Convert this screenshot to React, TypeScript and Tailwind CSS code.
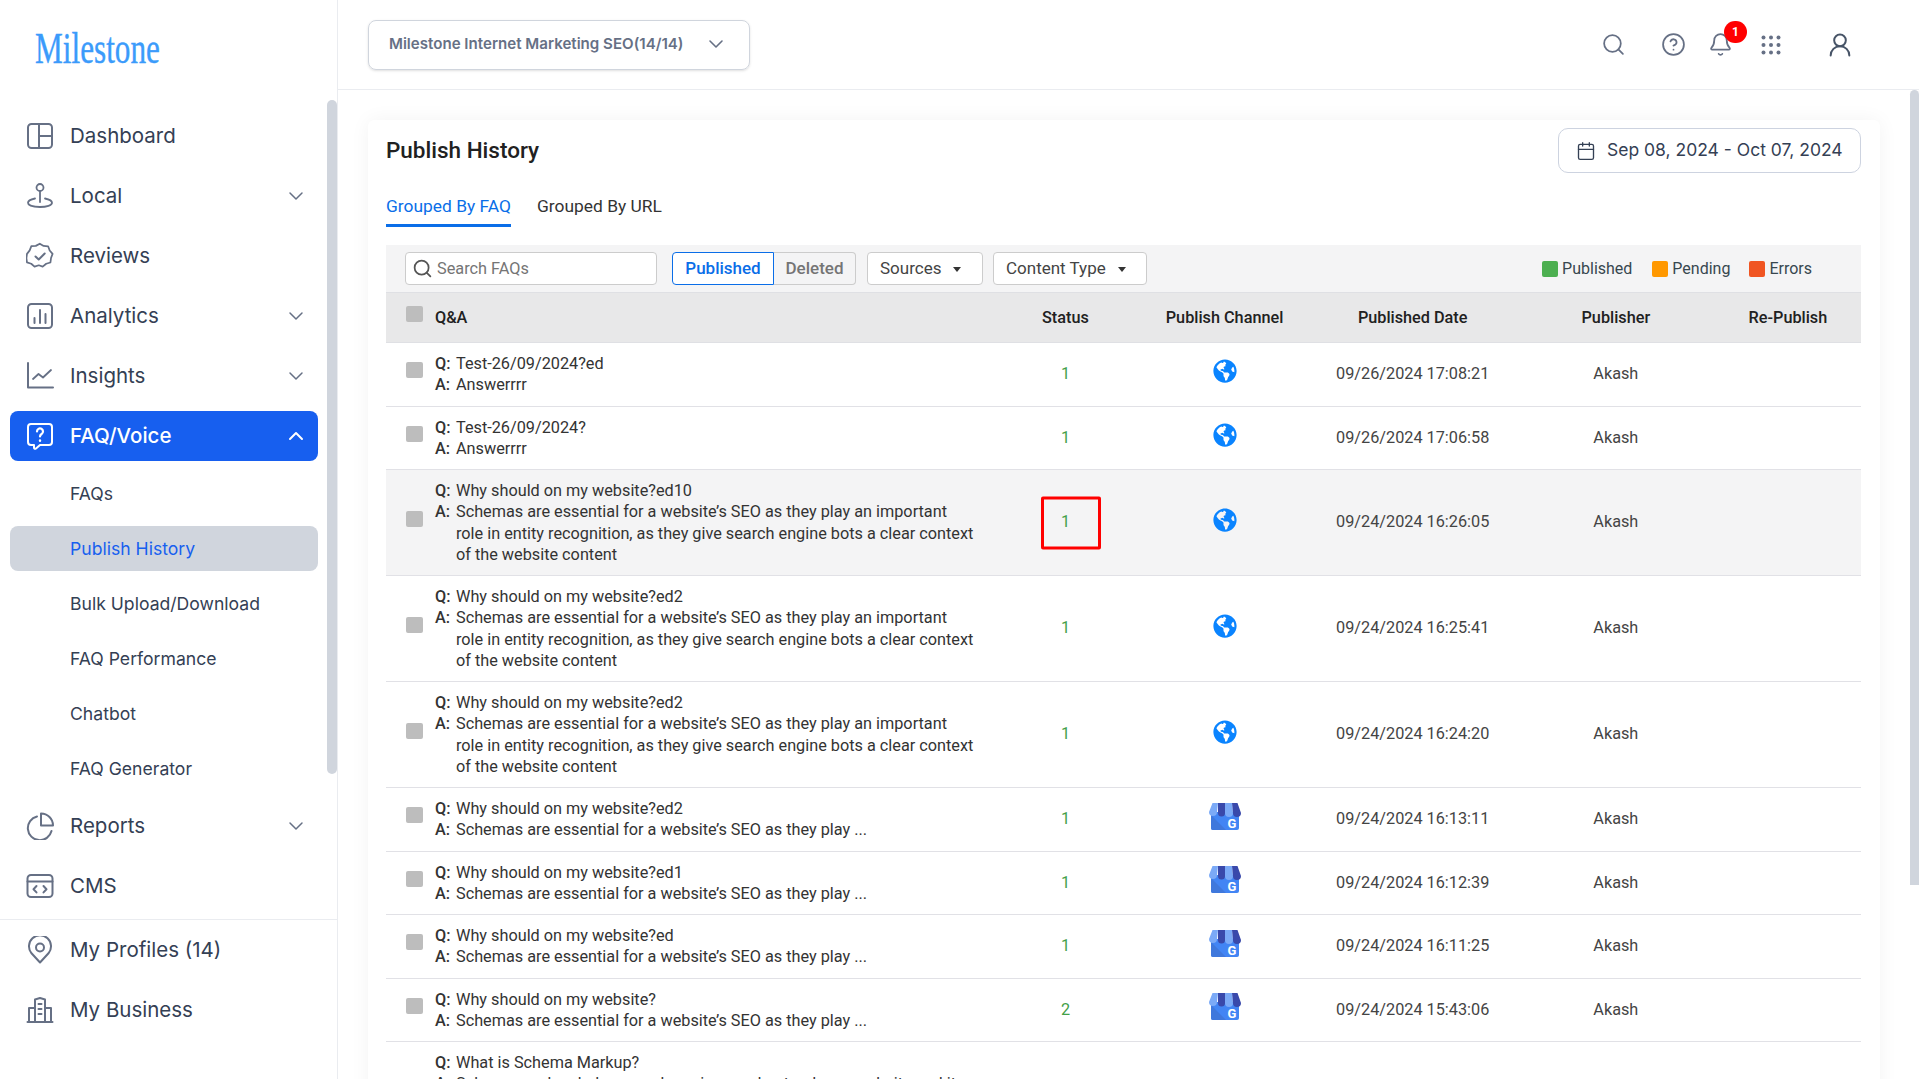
import { ChevronDown, ChevronUp, Search, CircleHelp, Bell, Calendar, UserRound } from 'lucide-react';
import { FaGlobeAmericas } from 'react-icons/fa';
import type { ReactNode } from 'react';

const iconProps = {
	viewBox: '0 0 28 28',
	fill: 'none',
	stroke: 'currentColor',
	strokeWidth: 1.8,
	strokeLinecap: 'round' as const,
	strokeLinejoin: 'round' as const,
	className: 'w-7 h-7 shrink-0',
};

const DashboardIcon = () => (
	<svg {...iconProps}>
		<rect x="2" y="2" width="24" height="24" rx="3.5" strokeWidth="2" />
		<path d="M13 2v24M13 14h13" strokeWidth="2" />
	</svg>
);
const LocalIcon = () => (
	<svg {...iconProps}>
		<circle cx="14" cy="5.5" r="3.5" />
		<path d="M14 9v11" />
		<path d="M9 16.5c-4 .8-7 2.3-7 4.3 0 2.6 5.4 4.2 12 4.2s12-1.6 12-4.2c0-2-3-3.5-7-4.3" />
	</svg>
);
const ReviewsIcon = () => (
	<svg {...iconProps}>
		<path d="M14 1.5l4 2.4 4.6.3 1.6 4.3 3 3.5-1.6 4.3-.6 4.6-4.4 1.3-3.6 3-4-1.4-4.4 1.4-3.4-3-4.4-1.4-.6-4.5L.8 12l2.8-3.6 1.7-4.3 4.6-.3z" transform="translate(.2 .2) scale(.97)" />
		<path d="M9.5 14.5l3.2 3 6-6" strokeWidth="2" />
	</svg>
);
const AnalyticsIcon = () => (
	<svg {...iconProps}>
		<rect x="2" y="2" width="24" height="24" rx="3.5" strokeWidth="2" />
		<path d="M8.5 21v-5M14 21V8M19.5 21v-9" strokeWidth="2" />
	</svg>
);
const InsightsIcon = () => (
	<svg {...iconProps}>
		<path d="M2 1v24.5h25" strokeWidth="2" />
		<path d="M7 17l5.5-5 4.5 3.5 8-7.5" />
	</svg>
);
const FaqIcon = () => (
	<svg {...iconProps}>
		<path d="M5 2h18a3 3 0 0 1 3 3v15a3 3 0 0 1-3 3h-9l-4 3.5c-.8.6-2 .4-2-.8V23H5a3 3 0 0 1-3-3V5a3 3 0 0 1 3-3z" strokeWidth="2" />
		<path d="M11 9.5a3 3 0 1 1 4.6 2.5c-1 .7-1.6 1.2-1.6 2.5" strokeWidth="2.2" />
		<path d="M14 18.5v.2" strokeWidth="2.4" />
	</svg>
);
const ReportsIcon = () => (
	<svg {...iconProps}>
		<path d="M11 4.5A12 12 0 1 0 25.5 19" strokeWidth="2" />
		<path d="M15 1.5A12 12 0 0 1 27 13.5H15z" strokeWidth="2" />
	</svg>
);
const CmsIcon = () => (
	<svg {...iconProps}>
		<rect x="1.5" y="3" width="25" height="22" rx="3.5" strokeWidth="2" />
		<path d="M1.5 9.5h25" strokeWidth="2" />
		<path d="M10.5 14l-3 3.2 3 3.2M17.5 14l3 3.2-3 3.2" strokeWidth="2" />
	</svg>
);
const PinIcon = () => (
	<svg {...iconProps}>
		<path d="M14 26.5l-8.5-9.2a11 11 0 1 1 17 0z" strokeWidth="2" />
		<circle cx="14" cy="11.5" r="4" strokeWidth="2" />
	</svg>
);
const BusinessIcon = () => (
	<svg {...iconProps}>
		<path d="M1.5 26h25" strokeWidth="2" />
		<path d="M9 26V3.5L14 2l5 1.5V26" strokeWidth="2" />
		<path d="M3 26V12h6M25 26V12h-6" strokeWidth="2" />
		<path d="M12.5 8h3M12.5 13h3M12.5 18h3" strokeWidth="2" />
	</svg>
);

const GridIcon = () => (
	<svg viewBox="0 0 20 20" className="w-5 h-5" fill="currentColor">
		{[2.5, 10, 17.5].map((cy) =>
			[2.5, 10, 17.5].map((cx) => <circle key={`${cx}-${cy}`} cx={cx} cy={cy} r="2" />),
		)}
	</svg>
);

const GmbIcon = () => (
	<svg viewBox="0 0 32 27" className="w-8 h-[27px]">
		<path d="M2 9h28v16a2 2 0 0 1-2 2H4a2 2 0 0 1-2-2z" fill="#4285f4" />
		<path d="M2 12l15 15H4a2 2 0 0 1-2-2z" fill="#3f78dc" />
		<path d="M3.500 0h5.500l-1 9a4 4 0 0 1-8 0z" fill="#7baaf7" />
		<path d="M9 0h7v10a3.500 3.500 0 0 1-7 0z" fill="#3949ab" />
		<path d="M16 0h7l1 10a4 4 0 0 1-8 0z" fill="#7baaf7" />
		<path d="M23 0h5.500L32 10a4 4 0 0 1-8 0z" fill="#3949ab" />
		<text x="23" y="25" textAnchor="middle" fontSize="13" fontWeight="700" fill="#fff" fontFamily="Roboto, sans-serif">G</text>
	</svg>
);

function NavItem({ icon, label, chevron, active }: { icon: ReactNode; label: string; chevron?: boolean; active?: boolean }) {
	return (
		<a className={`flex items-center h-[50px] pl-[16px] pr-[10px] rounded-lg ${active ? 'bg-[#175fef] text-white font-medium' : 'text-[#667085]'}`}>
			{icon}
			<span className={`ml-[16px] text-[20.500px] ${active ? 'text-white' : 'text-[#344054]'}`}>{label}</span>
			{chevron && !active && <ChevronDown className="ml-auto w-6 h-6" strokeWidth={1.5} />}
			{chevron && active && <ChevronUp className="ml-auto w-6 h-6" strokeWidth={2} />}
		</a>
	);
}

function SubItem({ label, active }: { label: string; active?: boolean }) {
	return (
		<a className={`flex items-center h-[45px] pt-[1px] pl-[60px] rounded-lg text-[17.600px] ${active ? 'bg-[#d0d5dd] text-[#175fef]' : 'text-[#344054]'}`}>
			{label}
		</a>
	);
}

type Row = { q: string; a: string[]; status: number; channel: 'web' | 'gmb'; date: string; hl?: boolean; box?: boolean };

const longAnswer = [
	'Schemas are essential for a website’s SEO as they play an important',
	'role in entity recognition, as they give search engine bots a clear context',
	'of the website content',
];
const shortAnswer = ['Schemas are essential for a website’s SEO as they play ...'];

const rows: Row[] = [
	{ q: 'Test-26/09/2024?ed', a: ['Answerrrr'], status: 1, channel: 'web', date: '09/26/2024 17:08:21' },
	{ q: 'Test-26/09/2024?', a: ['Answerrrr'], status: 1, channel: 'web', date: '09/26/2024 17:06:58' },
	{ q: 'Why should on my website?ed10', a: longAnswer, status: 1, channel: 'web', date: '09/24/2024 16:26:05', hl: true, box: true },
	{ q: 'Why should on my website?ed2', a: longAnswer, status: 1, channel: 'web', date: '09/24/2024 16:25:41' },
	{ q: 'Why should on my website?ed2', a: longAnswer, status: 1, channel: 'web', date: '09/24/2024 16:24:20' },
	{ q: 'Why should on my website?ed2', a: shortAnswer, status: 1, channel: 'gmb', date: '09/24/2024 16:13:11' },
	{ q: 'Why should on my website?ed1', a: shortAnswer, status: 1, channel: 'gmb', date: '09/24/2024 16:12:39' },
	{ q: 'Why should on my website?ed', a: shortAnswer, status: 1, channel: 'gmb', date: '09/24/2024 16:11:25' },
	{ q: 'Why should on my website?', a: shortAnswer, status: 2, channel: 'gmb', date: '09/24/2024 15:43:06' },
	{
		q: 'What is Schema Markup?',
		a: [
			'Schema markup helps search engines understand your website and its',
			'content, so pages can appear with richer results in search and give',
			'visitors a clearer picture',
		],
		status: 1,
		channel: 'web',
		date: '09/24/2024 15:40:12',
	},
];

export default function App() {
	return (
		<div className="flex w-full h-screen overflow-hidden bg-white font-['Inter',sans-serif]">
			<aside className="relative flex flex-col w-[338px] shrink-0 border-r border-[#eaecf0]">
				<div className="h-[111px] shrink-0 pl-[35px] pt-[24px]">
					<span className="block origin-left scale-x-[0.71] font-['Liberation_Serif',serif] text-[44px] leading-[50px] text-[#3b9bfb] [-webkit-text-stroke:0.4px_#3b9bfb]">Milestone</span>
				</div>
				<nav className="flex flex-col gap-2.5 pl-[10px] pr-[19px]">
					<NavItem icon={<DashboardIcon />} label="Dashboard" />
					<NavItem icon={<LocalIcon />} label="Local" chevron />
					<NavItem icon={<ReviewsIcon />} label="Reviews" />
					<NavItem icon={<AnalyticsIcon />} label="Analytics" chevron />
					<NavItem icon={<InsightsIcon />} label="Insights" chevron />
					<NavItem icon={<FaqIcon />} label="FAQ/Voice" chevron active />
					<SubItem label="FAQs" />
					<SubItem label="Publish History" active />
					<SubItem label="Bulk Upload/Download" />
					<SubItem label="FAQ Performance" />
					<SubItem label="Chatbot" />
					<SubItem label="FAQ Generator" />
					<NavItem icon={<ReportsIcon />} label="Reports" chevron />
					<NavItem icon={<CmsIcon />} label="CMS" />
				</nav>
				<div className="mt-2 pt-[5px] border-t border-[#eaecf0]">
					<nav className="flex flex-col gap-2.5 pl-[10px] pr-[19px]">
						<NavItem icon={<PinIcon />} label="My Profiles (14)" />
						<NavItem icon={<BusinessIcon />} label="My Business" />
					</nav>
				</div>
				<div className="absolute right-0 top-[100px] w-[10px] h-[674px] rounded-full bg-[#d0d5dd]" />
			</aside>

			<main className="relative flex flex-col flex-1 min-w-0">
				<header className="flex items-center h-[90px] shrink-0 pl-[30px] border-b border-[#eaecf0]">
					<button className="flex items-center justify-between w-[382px] h-[50px] pl-5 pr-[21px] pb-[1px] rounded-lg border border-[#d0d5dd] shadow-sm text-[15.100px] font-semibold text-[#667085]">
						<span>Milestone Internet Marketing SEO(14/14)</span>
						<ChevronDown className="w-6 h-6" strokeWidth={1.6} />
					</button>
					<div className="flex items-center ml-auto text-[#667085]">
						<Search className="w-[25px] h-[25px]" strokeWidth={1.7} />
						<CircleHelp className="w-[25px] h-[25px] ml-[35px]" strokeWidth={1.7} />
						<div className="relative ml-[22px]">
							<Bell className="w-[25px] h-[25px]" strokeWidth={1.7} />
							<span className="absolute -top-[11px] left-[16px] flex items-center justify-center w-[23px] h-[22px] rounded-full bg-[#ff0000] text-white text-[12px] font-bold font-['Roboto',sans-serif]">1</span>
						</div>
						<div className="ml-[28px]"><GridIcon /></div>
						<UserRound className="w-7 h-7 ml-[45px] mr-[65px] text-[#475467]" strokeWidth={1.7} />
					</div>
				</header>

				<div className="flex-1 min-h-0 pl-[30px] pt-[30px] overflow-hidden">
					<section className="w-[1512px] pl-[18px] pr-[19px] pt-[8px] rounded-md bg-white shadow-[0_0_20px_rgba(16,24,40,0.05)] font-['Roboto',sans-serif] text-[#333]">
						<div className="flex items-center justify-between h-[45px]">
							<h1 className="text-[22.500px] font-medium text-[#212121]">Publish History</h1>
							<button className="flex items-center h-[45px] w-[303px] pl-[17px] rounded-[10px] border border-[#cdd3e0] text-[#344054] font-['Inter',sans-serif]">
								<Calendar className="w-[20px] h-[20px] mr-[11px]" strokeWidth={1.6} />
								<span className="text-[17.500px]">Sep 08, 2024 - Oct 07, 2024</span>
							</button>
						</div>

						<div className="flex gap-[26px] mt-[17px] text-[17.400px]">
							<span className="pt-[3px] pb-[5px] leading-[26px] border-b-[3px] border-[#0a6ee8] text-[#0a6ee8]">Grouped By FAQ</span>
							<span className="pt-[3px] pb-[5px] leading-[26px] text-[#333]">Grouped By URL</span>
						</div>

						<div className="flex items-center h-[47px] mt-[18px] pl-[19px] pr-[49px] bg-[#f4f4f5] text-[16.300px]">
							<div className="flex items-center w-[252px] h-[33px] pl-[6px] rounded border border-[#ccc] bg-white text-[#757575]">
								<Search className="w-[21px] h-[21px] mr-[4px] text-[#555]" strokeWidth={2} />
								<span className="pt-[1px]">Search FAQs</span>
							</div>
							<div className="flex h-[33px] ml-[15px] text-[17px]">
								<span className="flex items-center justify-center w-[102px] rounded-l border border-[#0a6ee8] bg-white text-[#0a6ee8] font-medium">Published</span>
								<span className="flex items-center justify-center w-[82px] rounded-r border border-l-0 border-[#ccc] text-[#757575] font-medium">Deleted</span>
							</div>
							<button className="flex items-center gap-3 w-[116px] h-[33px] ml-[11px] pl-[12px] rounded border border-[#ccc] bg-white text-[17px] text-[#444]">
								Sources <span className="mt-[2px] border-x-[4.500px] border-x-transparent border-t-[5px] border-t-[#333]" />
							</button>
							<button className="flex items-center gap-3 w-[154px] h-[33px] ml-[10px] pl-[12px] rounded border border-[#ccc] bg-white text-[17px] text-[#444]">
								Content Type <span className="mt-[2px] border-x-[4.500px] border-x-transparent border-t-[5px] border-t-[#333]" />
							</button>
							<div className="flex items-center ml-auto text-[16px] text-[#37474f]">
								<span className="w-4 h-4 mr-[4px] rounded-[2px] bg-[#4caf50]" />Published
								<span className="w-4 h-4 ml-[20px] mr-[4px] rounded-[2px] bg-[#ff9800]" />Pending
								<span className="w-4 h-4 ml-[19px] mr-[4px] rounded-[2px] bg-[#f05522]" />Errors
							</div>
						</div>

						<table className="w-full table-fixed text-[16.250px]">
							<colgroup>
								<col className="w-[604px]" />
								<col className="w-[150px]" />
								<col className="w-[168px]" />
								<col className="w-[208px]" />
								<col className="w-[198px]" />
								<col className="w-[146px]" />
							</colgroup>
							<thead>
								<tr className="h-[50px] bg-[#e8e8e9] border-y border-[#dfe0e4] font-medium text-[#212121]">
									<th className="text-left font-medium pl-[20px] pt-[1px]">
										<div className="flex items-center">
											<div className="w-[17px] h-4 mb-[8px] rounded-[2px] bg-[#bdbdbd]" />
											<span className="ml-[12px]">Q&amp;A</span>
										</div>
									</th>
									<th className="font-medium pt-[1px]">Status</th>
									<th className="font-medium pt-[1px]">Publish Channel</th>
									<th className="font-medium pt-[1px]">Published Date</th>
									<th className="font-medium pt-[1px]">Publisher</th>
									<th className="font-medium pt-[1px]">Re-Publish</th>
								</tr>
							</thead>
							<tbody>
								{rows.map((r, i) => (
									<tr key={i} className={`border-b border-[#e1e1e6] ${r.hl ? 'bg-[#f4f4f5]' : ''}`}>
										<td className="pl-[20px] py-[10px]">
											<div className="flex items-center leading-[21.250px]">
												<div className="w-[17px] h-4 mb-[8px] shrink-0 rounded-[2px] bg-[#bdbdbd]" />
												<div className="ml-[12px]">
													<div className="flex">
														<b className="w-[21px] shrink-0 font-medium">Q:</b>
														<span>{r.q}</span>
													</div>
													<div className="flex">
														<b className="w-[21px] shrink-0 font-medium">A:</b>
														<span>
															{r.a.map((line) => (
																<span key={line} className="block">{line}</span>
															))}
														</span>
													</div>
												</div>
											</div>
										</td>
										<td className="text-center text-[#43a047]">
											<div className="relative">
												{r.status}
												{r.box && (
													<span className="absolute left-1/2 top-1/2 ml-[6px] w-[60px] h-[53px] -translate-x-1/2 -translate-y-1/2 rounded-[2px] border-[3.500px] border-[#ff0000]" />
												)}
											</div>
										</td>
										<td>
											<div className="flex justify-center mb-[6px] text-[#0a84ff]">
												{r.channel === 'web' ? <FaGlobeAmericas className="w-6 h-6" /> : <GmbIcon />}
											</div>
										</td>
										<td className="text-center text-[#444]">{r.date}</td>
										<td className="text-center text-[#444]">Akash</td>
										<td />
									</tr>
								))}
							</tbody>
						</table>
					</section>
				</div>
				<div className="absolute right-0 top-[90px] w-[9px] h-[795px] rounded-t-full bg-[#d0d5dd]" />
			</main>
		</div>
	);
}
